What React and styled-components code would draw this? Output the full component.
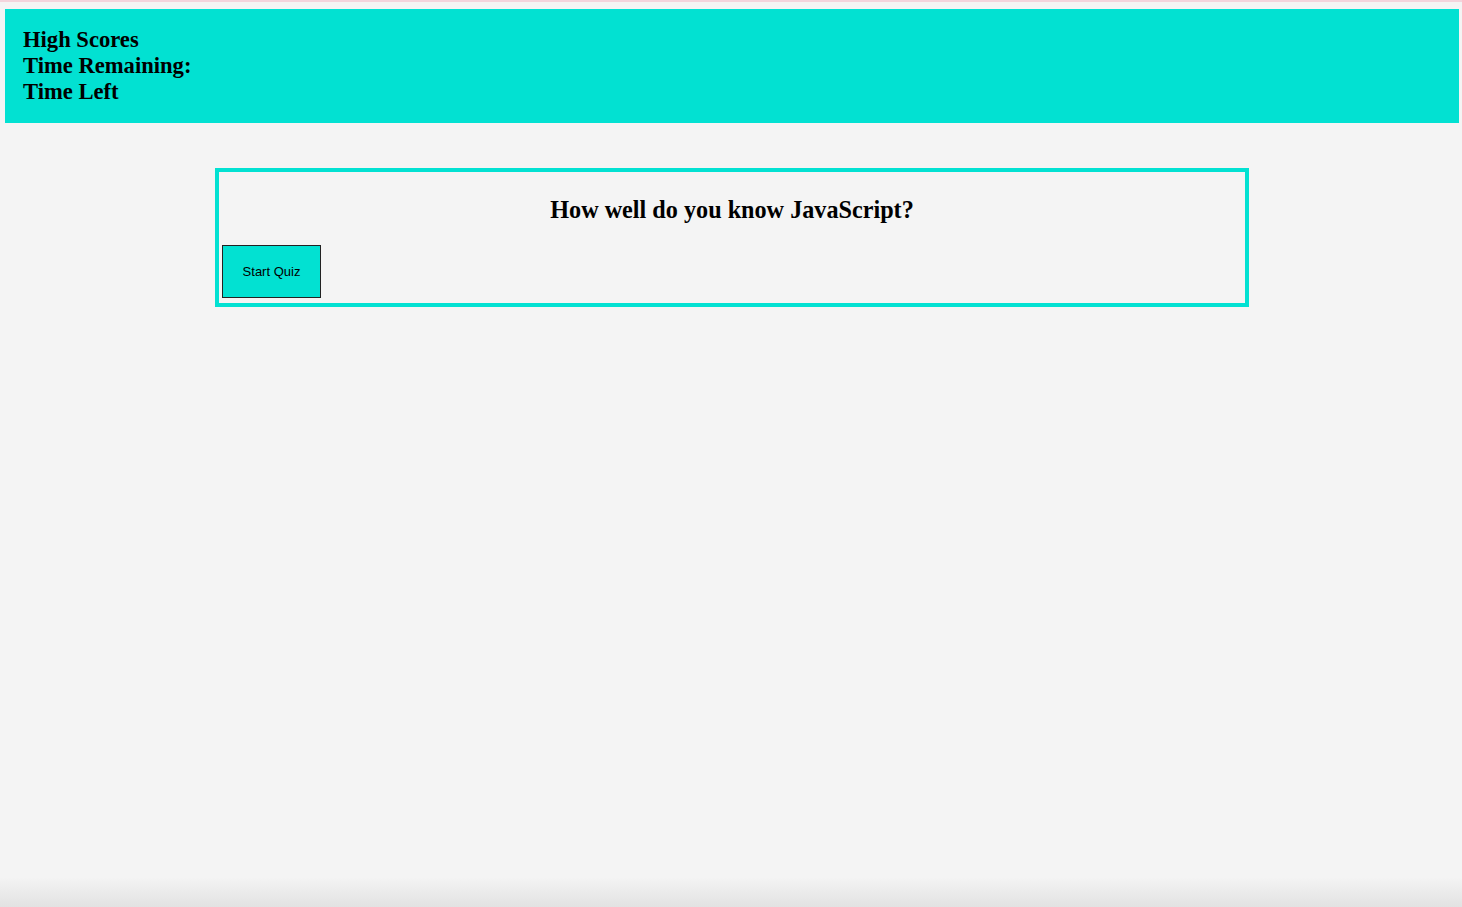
import React from "react";
import styled, { createGlobalStyle } from "styled-components";

const GlobalStyle = createGlobalStyle`
  html, body {
    margin: 0;
    padding: 0;
  }
  body {
    min-height: 100vh;
    font-family: "Liberation Serif", "Times New Roman", serif;
    background: linear-gradient(to bottom, #f4f4f4 0, #f4f4f4 calc(100% - 30px), #e2e2e2 100%);
    border-top: 2px solid #f3d4dc;
    box-sizing: border-box;
  }
`;

const Page = styled.div`
  padding: 7px 3px 0 5px;
`;

const Header = styled.header`
  background-color: #02e1d2;
  padding: 18px 18px;
  height: 114px;
  box-sizing: border-box;
  display: flex;
  flex-direction: column;
  justify-content: center;
`;

const HeaderLine = styled.div`
  font-size: 22.6px;
  font-weight: bold;
  line-height: 26px;
  color: #000;
`;

const QuizBox = styled.section`
  width: 1034px;
  box-sizing: border-box;
  margin: 45px auto 0;
  border: 4px solid #02e1d2;
  padding: 24px 3px 5px;
`;

const Title = styled.h2`
  margin: 0 0 21px;
  text-align: center;
  font-size: 24.2px;
  line-height: 28px;
  font-weight: bold;
`;

const StartButton = styled.button`
  display: block;
  width: 99px;
  height: 53px;
  background-color: #02e1d2;
  border: 1px solid #222;
  font-family: "Liberation Sans", Arial, sans-serif;
  font-size: 13px;
  color: #000;
  padding: 0;
  cursor: pointer;
`;

export default function App() {
  return (
    <>
      <GlobalStyle />
      <Page>
        <Header>
          <HeaderLine>High Scores</HeaderLine>
          <HeaderLine>Time Remaining:</HeaderLine>
          <HeaderLine>Time Left</HeaderLine>
        </Header>
        <QuizBox>
          <Title>How well do you know JavaScript?</Title>
          <StartButton>Start Quiz</StartButton>
        </QuizBox>
      </Page>
    </>
  );
}
